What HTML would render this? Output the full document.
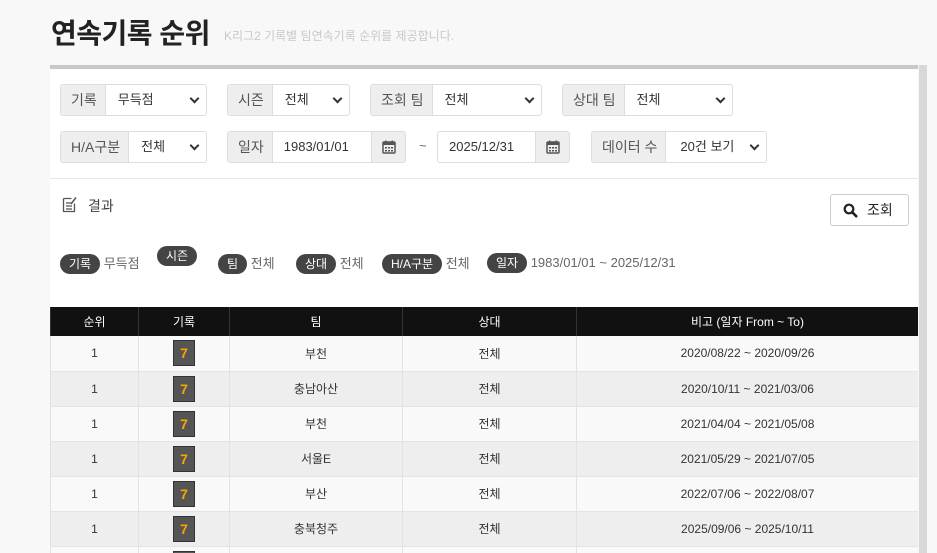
<!DOCTYPE html>
<html><head><meta charset="utf-8"><style>
*{box-sizing:border-box;margin:0;padding:0}
html,body{width:937px;height:553px;overflow:hidden}
body{background:#f8f8f8;font-family:"Liberation Sans","Noto Sans CJK KR",sans-serif;position:relative;color:#333}
.a{position:absolute}
h1{position:absolute;left:51px;top:12px;font-size:28px;font-weight:bold;color:#222;letter-spacing:-0.5px}
.sub{left:224px;top:27px;font-size:12px;color:#c8c8c8}
.panel{left:50px;top:65px;width:868px;height:488px;background:#fff;border-top:4px solid #c8c8c8}
.strip{left:919px;top:65px;width:8px;height:488px;background:#d8d8d8}
.grp{position:absolute;height:32px;border:1px solid #ddd;border-radius:3px;display:flex;font-size:14px;background:#fff;overflow:hidden}
.grp .l{background:#eee;color:#555;padding:0 8px 0 10px;line-height:30px;border-right:1px solid #ddd;white-space:nowrap}
.grp .v{flex:1;padding-left:12px;line-height:30px;color:#333;position:relative;font-size:13px}
.grp .v.s:after{content:"";position:absolute;right:8px;top:10px;width:5px;height:5px;border-right:2px solid #333;border-bottom:2px solid #333;transform:rotate(45deg)}
.cal{width:34px;border-left:1px solid #ddd;background:#eee;display:flex;align-items:center;justify-content:center}
.tag{display:inline-block;background:#444;color:#fff;border-radius:11px;padding:0 9px;height:20px;line-height:20px;font-size:12px}
.ft{position:absolute;top:253px;font-size:13px;color:#666}
.tw{position:absolute;left:50px;top:307px;width:868px;height:246px;overflow:hidden}
table{width:868px;border-collapse:collapse;font-size:12px}
th{background:#111;color:#fff;font-weight:normal;height:29px;border-left:1px solid #333}
td{height:35px;text-align:center;border-left:1px solid #e2e2e2;border-bottom:1px solid #e4e4e4;color:#333}
tr:nth-child(even) td{background:#f9f9f9}
tr:nth-child(odd) td{background:#eeeeee}
.b7{display:inline-block;width:22px;height:26px;background:#555;border:1px solid #333;color:#f7a800;font-weight:bold;font-size:14px;line-height:24px;vertical-align:middle}
</style></head><body>
<h1>연속기록 순위</h1>
<div class="a sub">K리그2 기록별 팀연속기록 순위를 제공합니다.</div>
<div class="a panel"></div>
<div class="a strip"></div>
<div class="grp" style="left:60px;top:84px;width:147px"><div class="l">기록</div><div class="v s">무득점</div></div>
<div class="grp" style="left:227px;top:84px;width:123px"><div class="l">시즌</div><div class="v s">전체</div></div>
<div class="grp" style="left:370px;top:84px;width:172px"><div class="l">조회 팀</div><div class="v s">전체</div></div>
<div class="grp" style="left:562px;top:84px;width:171px"><div class="l">상대 팀</div><div class="v s">전체</div></div>
<div class="grp" style="left:60px;top:131px;width:147px"><div class="l">H/A구분</div><div class="v s">전체</div></div>
<div class="grp" style="left:227px;top:131px;width:179px"><div class="l">일자</div><div class="v" style="padding-left:11px">1983/01/01</div><div class="cal"><svg width="14" height="14" viewBox="0 0 14 14"><rect x="1" y="2" width="12" height="11" rx="1" fill="none" stroke="#555" stroke-width="1.5"/><rect x="1" y="2" width="12" height="3" fill="#555"/><rect x="3" y="0.5" width="1.5" height="3" fill="#555"/><rect x="9.5" y="0.5" width="1.5" height="3" fill="#555"/><g fill="#555"><rect x="3" y="7" width="2" height="1.5"/><rect x="6" y="7" width="2" height="1.5"/><rect x="9" y="7" width="2" height="1.5"/><rect x="3" y="10" width="2" height="1.5"/><rect x="6" y="10" width="2" height="1.5"/><rect x="9" y="10" width="2" height="1.5"/></g></svg></div></div>
<div class="a" style="left:419px;top:138px;font-size:13px;color:#666">~</div>
<div class="grp" style="left:437px;top:131px;width:133px"><div class="v" style="padding-left:11px">2025/12/31</div><div class="cal"><svg width="14" height="14" viewBox="0 0 14 14"><rect x="1" y="2" width="12" height="11" rx="1" fill="none" stroke="#555" stroke-width="1.5"/><rect x="1" y="2" width="12" height="3" fill="#555"/><rect x="3" y="0.5" width="1.5" height="3" fill="#555"/><rect x="9.5" y="0.5" width="1.5" height="3" fill="#555"/><g fill="#555"><rect x="3" y="7" width="2" height="1.5"/><rect x="6" y="7" width="2" height="1.5"/><rect x="9" y="7" width="2" height="1.5"/><rect x="3" y="10" width="2" height="1.5"/><rect x="6" y="10" width="2" height="1.5"/><rect x="9" y="10" width="2" height="1.5"/></g></svg></div></div>
<div class="grp" style="left:591px;top:131px;width:176px"><div class="l">데이터 수</div><div class="v s" style="padding-left:14px">20건 보기</div></div>
<div class="a" style="left:50px;top:178px;width:868px;height:1px;background:#e8e8e8"></div>
<svg class="a" style="left:62px;top:196px" width="16" height="17" viewBox="0 0 16 17"><path d="M1.5 2.5h8M1.5 2.5v13h11v-8" fill="none" stroke="#555" stroke-width="1.3"/><path d="M4 7h6M4 10h6M4 13h6" stroke="#555" stroke-width="1.2"/><path d="M9 8l5-6.5" stroke="#555" stroke-width="1.5"/></svg>
<div class="a" style="left:88px;top:196px;font-size:14px;color:#444">결과</div>
<div class="a" style="left:830px;top:194px;width:79px;height:32px;border:1px solid #ccc;border-radius:3px;background:#fff;font-size:14px;color:#222;line-height:30px;padding-left:36px">조회</div>
<svg class="a" style="left:843px;top:203px" width="15" height="15" viewBox="0 0 15 15"><circle cx="6" cy="6" r="4.3" fill="none" stroke="#222" stroke-width="2.2"/><path d="M9.2 9.2l4 4" stroke="#222" stroke-width="2.6" stroke-linecap="round"/></svg>
<div class="ft" style="left:60px"><span class="tag">기록</span> 무득점</div>
<div class="ft" style="left:157px;top:246px"><span class="tag">시즌</span></div>
<div class="ft" style="left:218px"><span class="tag">팀</span> 전체</div>
<div class="ft" style="left:296px"><span class="tag">상대</span> 전체</div>
<div class="ft" style="left:382px"><span class="tag">H/A구분</span> 전체</div>
<div class="ft" style="left:487px"><span class="tag">일자</span> 1983/01/01 ~ 2025/12/31</div>
<div class="tw"><table>
<colgroup><col style="width:88px"><col style="width:91px"><col style="width:173px"><col style="width:174px"><col></colgroup>
<tr><th>순위</th><th>기록</th><th>팀</th><th>상대</th><th>비고 (일자 From ~ To)</th></tr>
<tr><td>1</td><td><span class="b7">7</span></td><td>부천</td><td>전체</td><td>2020/08/22 ~ 2020/09/26</td></tr>
<tr><td>1</td><td><span class="b7">7</span></td><td>충남아산</td><td>전체</td><td>2020/10/11 ~ 2021/03/06</td></tr>
<tr><td>1</td><td><span class="b7">7</span></td><td>부천</td><td>전체</td><td>2021/04/04 ~ 2021/05/08</td></tr>
<tr><td>1</td><td><span class="b7">7</span></td><td>서울E</td><td>전체</td><td>2021/05/29 ~ 2021/07/05</td></tr>
<tr><td>1</td><td><span class="b7">7</span></td><td>부산</td><td>전체</td><td>2022/07/06 ~ 2022/08/07</td></tr>
<tr><td>1</td><td><span class="b7">7</span></td><td>충북청주</td><td>전체</td><td>2025/09/06 ~ 2025/10/11</td></tr>
<tr><td>1</td><td><span class="b7">7</span></td><td></td><td></td><td></td></tr>
</table></div>
</body></html>
